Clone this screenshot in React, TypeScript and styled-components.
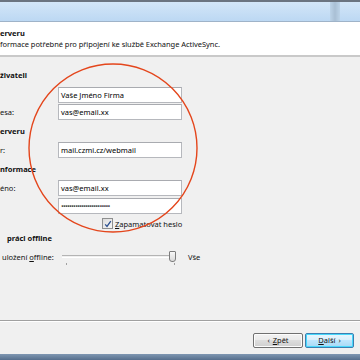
import styled, { createGlobalStyle } from 'styled-components'

const GlobalStyle = createGlobalStyle`
  html, body {
    margin: 0;
    padding: 0;
    width: 360px;
    height: 360px;
    overflow: hidden;
    background: #f0f0f0;
  }
  body {
    font-family: 'Noto Sans', 'Open Sans', sans-serif;
    font-size: 7.5px;
    color: #111;
  }
`

const Window = styled.div`
  position: relative;
  width: 360px;
  height: 360px;
  display: flex;
  flex-direction: column;
  overflow: hidden;
`

const TopBar = styled.div`
  height: 19px;
  border-top: 2px solid #6b7480;
  border-bottom: 1px solid #9fb3c8;
  background: linear-gradient(#d3e6f8, #bcd8f3);
  display: flex;
`

const TopBarFill = styled.div`
  flex: 1;
`

const TopBarGrip = styled.div`
  width: 10px;
  margin-right: 20px;
  background: linear-gradient(90deg, #bcd3e8, #a9bfd4, #bcd3e8);
`

const Header = styled.div`
  height: 33px;
  background: #fff;
  border-bottom: 2px solid #c9c9c9;
  display: flex;
  flex-direction: column;
  justify-content: center;
  gap: 1px;
`

const HeaderTitle = styled.div`
  font-weight: 700;
  line-height: 10px;
`

const HeaderText = styled.div`
  line-height: 10px;
  letter-spacing: -0.05px;
`

const Body = styled.div`
  flex: 1;
  display: flex;
  flex-direction: column;
  padding-top: 12px;
`

const SectionTitle = styled.div<{ $indent?: number; $mt?: number }>`
  font-weight: 700;
  line-height: 12px;
  height: 12px;
  padding-left: ${(p) => p.$indent ?? 0}px;
  margin-top: ${(p) => p.$mt ?? 0}px;
`

const FieldRow = styled.div<{ $mt: number }>`
  display: grid;
  grid-template-columns: 58px 124px;
  align-items: center;
  margin-top: ${(p) => p.$mt}px;
`

const Label = styled.span`
  line-height: 16px;
  white-space: nowrap;
`

const TextBox = styled.div`
  height: 14px;
  border: 1px solid #b6b8bd;
  border-top-color: #a9abb0;
  background: #fff;
  padding-left: 2px;
  line-height: 14px;
  white-space: nowrap;
  overflow: hidden;
  color: #000;
`

const Dots = styled.span`
  letter-spacing: -0.8px;
  color: #444;
`

const CheckRow = styled.div`
  display: flex;
  align-items: center;
  gap: 2px;
  margin-top: 4px;
  padding-left: 102px;
  height: 11px;
`

const CheckBox = styled.div`
  width: 9px;
  height: 9px;
  border: 1px solid #8e8f8f;
  background: linear-gradient(135deg, #dcdcdc, #f6f6f6);
  display: flex;
  align-items: center;
  justify-content: center;
`

const SliderRow = styled.div`
  display: flex;
  align-items: flex-start;
  margin-top: 6px;
  height: 18px;
`

const SliderLabel = styled.span`
  width: 60px;
  padding-left: 2px;
  line-height: 14px;
  white-space: nowrap;
`

const Slider = styled.div`
  width: 116px;
  height: 18px;
  display: flex;
  flex-direction: column;
`

const TrackLine = styled.div`
  display: flex;
  align-items: center;
  height: 12px;
`

const Track = styled.div`
  flex: 1;
  height: 1px;
  border-top: 1px solid #b4b4b4;
  border-bottom: 1px solid #fff;
`

const Thumb = styled.div`
  width: 5px;
  height: 9px;
  border: 1px solid #7c7c7c;
  border-radius: 1px 1px 3px 3px;
  background: linear-gradient(#f7f7f7, #d9d9d9);
  margin-right: 2px;
`

const Ticks = styled.div`
  display: flex;
  justify-content: space-between;
  padding: 1px 3px 0 4px;
`

const Tick = styled.div`
  width: 1px;
  height: 2px;
  background: #a0a0a0;
`

const SliderValue = styled.span`
  margin-left: 10px;
  line-height: 14px;
`

const Spacer = styled.div`
  flex: 1;
`

const Separator = styled.div`
  border-top: 1px solid #a0a0a0;
  border-bottom: 1px solid #fff;
`

const ButtonBar = styled.div`
  display: flex;
  justify-content: flex-end;
  gap: 2px;
  padding: 11px 6px 6px 0;
`

const Button = styled.div<{ $default?: boolean }>`
  width: ${(p) => (p.$default ? 47 : 48)}px;
  height: 13px;
  border: 1px solid ${(p) => (p.$default ? '#3c7fb1' : '#707070')};
  border-radius: 2px;
  background: ${(p) =>
    p.$default
      ? 'linear-gradient(#eaf6fd 0%, #d9f0fc 45%, #bee6fd 50%, #a7d9f5 100%)'
      : 'linear-gradient(#f2f2f2 0%, #ebebeb 45%, #dddddd 50%, #cfcfcf 100%)'};
  box-shadow: inset 0 0 0 1px ${(p) => (p.$default ? '#48d8fb' : '#fcfcfc')};
  display: flex;
  align-items: center;
  justify-content: center;
  gap: 3px;
  line-height: 13px;
`

const BottomBar = styled.div`
  height: 6px;
  background: linear-gradient(#7f97b2, #566f8d);
`

const Circle = styled.svg`
  position: absolute;
  left: 0;
  top: 0;
  pointer-events: none;
`

export default function App() {
  return (
    <>
      <GlobalStyle />
      <Window>
        <TopBar>
          <TopBarFill />
          <TopBarGrip />
        </TopBar>
        <Header>
          <HeaderTitle>erveru</HeaderTitle>
          <HeaderText>formace potřebné pro připojení ke službě Exchange ActiveSync.</HeaderText>
        </Header>
        <Body>
          <SectionTitle>živateli</SectionTitle>
          <FieldRow $mt={6}>
            <Label />
            <TextBox>Vaše Jméno Firma</TextBox>
          </FieldRow>
          <FieldRow $mt={1}>
            <Label>esa:</Label>
            <TextBox>vas@email.xx</TextBox>
          </FieldRow>
          <SectionTitle $mt={5}>erveru</SectionTitle>
          <FieldRow $mt={5}>
            <Label>r:</Label>
            <TextBox>mail.czmi.cz/webmail</TextBox>
          </FieldRow>
          <SectionTitle $mt={5}>nformace</SectionTitle>
          <FieldRow $mt={5}>
            <Label>éno:</Label>
            <TextBox>vas@email.xx</TextBox>
          </FieldRow>
          <FieldRow $mt={2}>
            <Label />
            <TextBox>
              <Dots>••••••••••••••••••••••••</Dots>
            </TextBox>
          </FieldRow>
          <CheckRow>
            <CheckBox>
              <svg width="8" height="8" viewBox="0 0 8 8">
                <path d="M1.2 4.4 L3 6.4 L6.8 1.2" fill="none" stroke="#2b4f8f" strokeWidth="1.3" />
              </svg>
            </CheckBox>
            <span>
              <u>Z</u>apamatovat heslo
            </span>
          </CheckRow>
          <SectionTitle $indent={7} $mt={3}>
            práci offline
          </SectionTitle>
          <SliderRow>
            <SliderLabel>
              uložení <u>o</u>ffline:
            </SliderLabel>
            <Slider>
              <TrackLine>
                <Track />
                <Thumb />
              </TrackLine>
              <Ticks>
                <Tick />
                <Tick />
              </Ticks>
            </Slider>
            <SliderValue>Vše</SliderValue>
          </SliderRow>
          <Spacer />
          <Separator />
          <ButtonBar>
            <Button>
              <span>‹</span>
              <span>
                <u>Z</u>pět
              </span>
            </Button>
            <Button $default>
              <span>
                <u>D</u>alší
              </span>
              <span>›</span>
            </Button>
          </ButtonBar>
        </Body>
        <BottomBar />
        <Circle width="360" height="360" viewBox="0 0 360 360">
          <circle cx="113" cy="148" r="84" fill="none" stroke="#e4461c" strokeWidth="1.4" />
        </Circle>
      </Window>
    </>
  )
}
